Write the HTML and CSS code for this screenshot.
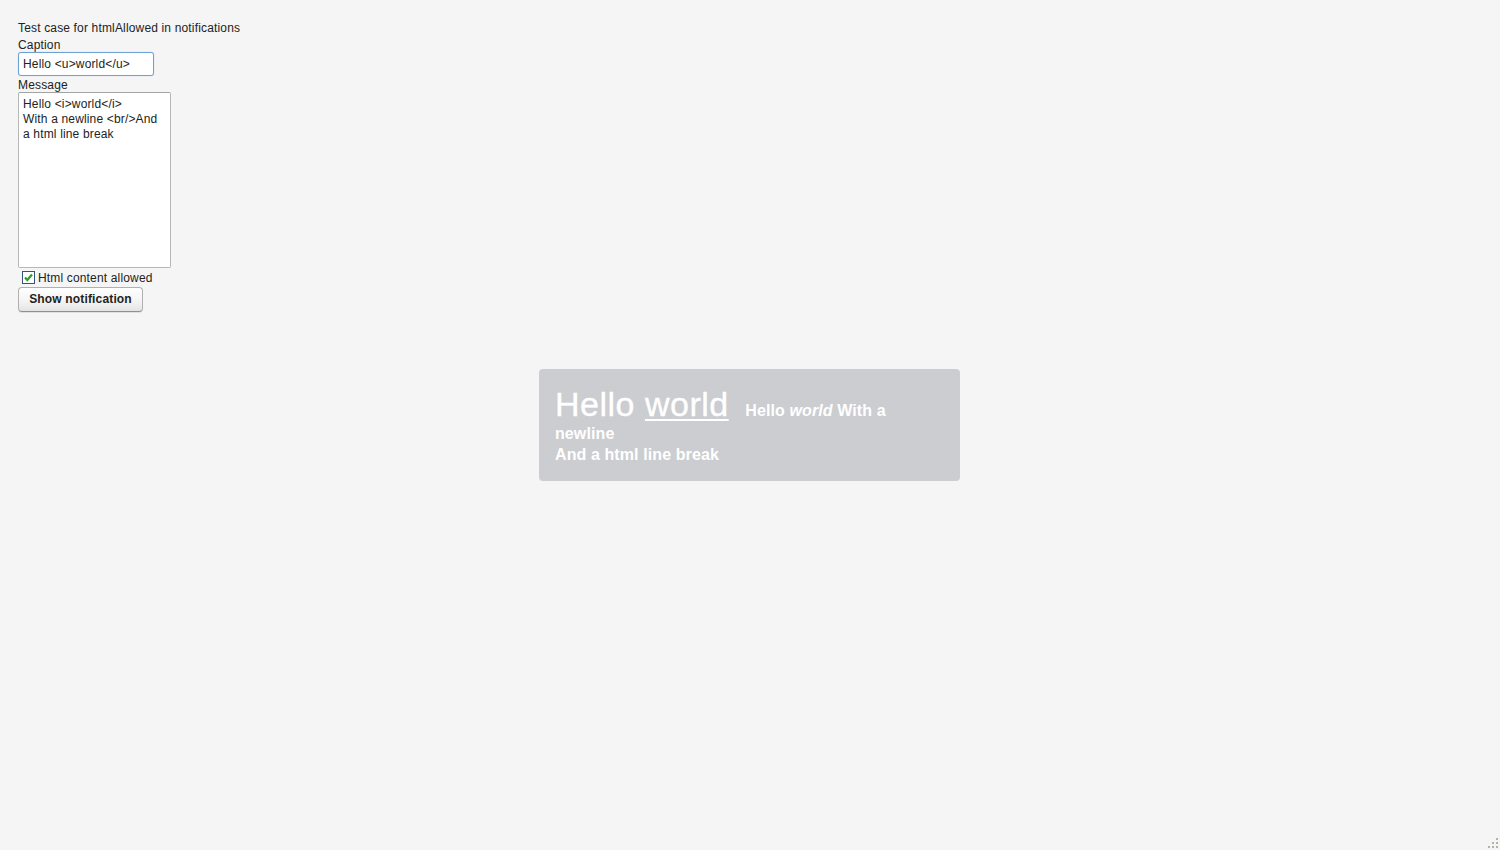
FILE: index.html
```html
<!DOCTYPE html>
<html>
<head>
<meta charset="utf-8">
<title>htmlAllowed</title>
<link rel="stylesheet" href="styles.css">
</head>
<body>
<div class="app">
  <div class="label title">Test case for htmlAllowed in notifications</div>
  <div class="label caption-label">Caption</div>
  <input class="textfield" type="text" value="Hello <u>world</u>">
  <div class="label caption-label">Message</div>
  <textarea class="textarea">Hello <i>world</i>
With a newline <br/>And a html line break</textarea>
  <label class="checkbox">
    <span class="box"><svg width="11" height="11" viewBox="0 0 11 11"><path d="M2 5.5 L4.3 8 L9 2.5" fill="none" stroke="#2f9a2f" stroke-width="2.2"/></svg></span>
    <span class="cb-text">Html content allowed</span>
  </label>
  <div><button class="button">Show notification</button></div>
</div>

<div class="notification">
  <h1 class="n-caption">Hello <u>world</u></h1>
  <p class="n-desc">Hello <i>world</i> With a newline<br>And a html line break</p>
</div>

<div class="resize-handle">
  <svg width="12" height="12" viewBox="0 0 12 12">
    <rect x="8" y="0" width="2" height="2" fill="#b4b4a6"/>
    <rect x="4" y="4" width="2" height="2" fill="#b4b4a6"/>
    <rect x="8" y="4" width="2" height="2" fill="#b4b4a6"/>
    <rect x="0" y="8" width="2" height="2" fill="#b4b4a6"/>
    <rect x="4" y="8" width="2" height="2" fill="#b4b4a6"/>
    <rect x="8" y="8" width="2" height="2" fill="#b4b4a6"/>
  </svg>
</div>
</body>
</html>
```

FILE: styles.css
```css
html, body {
  margin: 0;
  padding: 0;
  height: 100%;
}
body {
  background: #f5f5f5;
  font-family: "Liberation Sans", Arial, sans-serif;
  font-size: 12px;
  letter-spacing: 0.16px;
  color: #222;
  overflow: hidden;
}
.app {
  padding: 20px 0 0 18px;
  display: flex;
  flex-direction: column;
  align-items: flex-start;
}
.label {
  line-height: 16px;
  height: 16px;
  color: #222;
}
.caption-label {
  line-height: 14px;
  height: 14px;
  margin-top: 2px;
}
.textfield {
  box-sizing: border-box;
  width: 136px;
  height: 24px;
  margin: 0;
  padding: 0 4px 0 4px;
  font-family: "Liberation Sans", Arial, sans-serif;
  font-size: 12px;
  letter-spacing: 0.16px;
  color: #222;
  background: #fff;
  border: 1px solid #6ea2d6;
  border-radius: 3px;
  box-shadow: 0 0 1px #9cc3ea;
  outline: none;
}
.textarea {
  box-sizing: border-box;
  width: 153px;
  height: 176px;
  margin: 0;
  padding: 4px 6px 4px 4px;
  font-family: "Liberation Sans", Arial, sans-serif;
  font-size: 12px;
  letter-spacing: 0.16px;
  line-height: 15px;
  color: #222;
  background: #fff;
  border: 1px solid #b7b7b7;
  border-top-color: #a3a3a3;
  border-radius: 2px;
  resize: none;
  overflow: hidden;
  outline: none;
}
.checkbox {
  display: flex;
  align-items: center;
  height: 19px;
  padding-left: 4px;
}
.box {
  box-sizing: border-box;
  width: 13px;
  height: 13px;
  border: 1px solid #34547a;
  background: #fff;
  display: flex;
  align-items: center;
  justify-content: center;
  margin-right: 3px;
}
.box svg { display: block; }
.cb-text {
  line-height: 15px;
  padding-top: 2px;
}
.button {
  box-sizing: border-box;
  width: 125px;
  height: 25px;
  margin: 0;
  padding: 0 0 1px;
  white-space: nowrap;
  font-family: "Liberation Sans", Arial, sans-serif;
  font-size: 12px;
  font-weight: bold;
  letter-spacing: 0.16px;
  color: #222;
  background: linear-gradient(#ffffff, #f3f3f3 60%, #e4e4e4);
  border: 1px solid #b0b0b0;
  border-bottom-color: #8f8f8f;
  border-radius: 4px;
  box-shadow: 0 1px 0 #e0e0e0;
  cursor: pointer;
}
.notification {
  position: absolute;
  left: 539px;
  top: 369px;
  box-sizing: border-box;
  width: 421px;
  height: 112px;
  padding: 16px 16px 0 16px;
  background: #cbcdd1;
  border-radius: 4px;
  color: #fff;
  font-size: 16px;
  line-height: 21px;
}
.n-caption {
  display: inline;
  margin: 0 12px 0 0;
  font-size: 34px;
  font-weight: normal;
  letter-spacing: 0.5px;
  line-height: 38px;
  -webkit-text-stroke: 0.35px #fff;
}
.n-caption u {
  text-decoration-thickness: 2px;
  text-underline-offset: 3px;
}
.n-desc {
  display: inline;
  margin: 0;
  font-size: 16px;
  font-weight: bold;
  letter-spacing: 0.1px;
}
.resize-handle {
  position: absolute;
  right: 0;
  bottom: 0;
  width: 12px;
  height: 12px;
}
.resize-handle svg { display: block; }
```
